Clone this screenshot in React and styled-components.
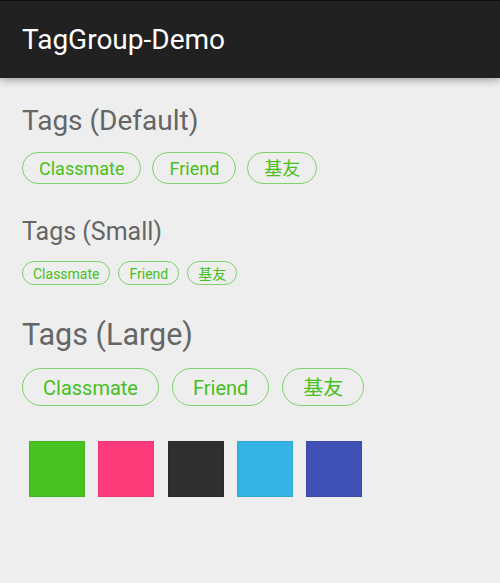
import React from 'react';
import styled, { createGlobalStyle } from 'styled-components';

const GlobalStyle = createGlobalStyle`
  html, body {
    margin: 0;
    padding: 0;
    background: #eeeeee;
    font-family: Roboto, "Noto Sans", "Noto Sans CJK SC", sans-serif;
  }
`;

const sizes = {
  default: { font: 18, height: 32, padX: 16, gap: 11, headFont: 28 },
  small: { font: 14, height: 24, padX: 10, gap: 8, headFont: 25 },
  large: { font: 20, height: 38, padX: 20, gap: 13, headFont: 30.5 },
};

const Page = styled.div`
  width: 500px;
  height: 583px;
  background: #eeeeee;
  overflow: hidden;
`;

const Toolbar = styled.header`
  height: 77px;
  background: #212121;
  border-top: 1px solid #0c0c0c;
  box-shadow: 0 2px 8px rgba(0, 0, 0, 0.35);
  display: flex;
  align-items: center;
  padding-left: 22px;
  position: relative;
  z-index: 1;
`;

const Title = styled.h1`
  margin: 0;
  color: #ffffff;
  font-size: 28px;
  font-weight: 400;
  line-height: 1;
`;

const Content = styled.main`
  padding: 29px 22px 0;
  display: flex;
  flex-direction: column;
`;

const Section = styled.section`
  display: flex;
  flex-direction: column;
  gap: 17px;
  margin-bottom: 35px;
`;

const Heading = styled.h2`
  margin: 0;
  height: ${p => Math.ceil(sizes[p.$size].headFont)}px;
  color: #666666;
  font-weight: 400;
  font-size: ${p => sizes[p.$size].headFont}px;
  line-height: 1;
`;

const TagRow = styled.div`
  display: flex;
  gap: ${p => sizes[p.$size].gap}px;
`;

const Tag = styled.span`
  box-sizing: border-box;
  height: ${p => sizes[p.$size].height}px;
  padding: 2px ${p => sizes[p.$size].padX}px 0;
  display: inline-flex;
  align-items: center;
  border: 1px solid #7ed36a;
  border-radius: ${p => sizes[p.$size].height / 2}px;
  color: #46c01c;
  font-size: ${p => sizes[p.$size].font}px;
  line-height: 1;
`;

const Swatches = styled.div`
  display: flex;
  gap: 13.25px;
  padding-left: 7px;
`;

const Swatch = styled.div`
  box-sizing: border-box;
  width: 56px;
  height: 56px;
  background: ${p => p.$color};
  border: 1px solid rgba(0, 0, 0, 0.08);
`;

const groups = [
  { size: 'default', label: 'Tags (Default)' },
  { size: 'small', label: 'Tags (Small)' },
  { size: 'large', label: 'Tags (Large)' },
];

const tags = ['Classmate', 'Friend', '基友'];
const colors = ['#49c322', '#ff3c7b', '#2f2f2f', '#33b4e4', '#3f51b5'];

export default function App() {
  return (
    <Page>
      <GlobalStyle />
      <Toolbar>
        <Title>TagGroup-Demo</Title>
      </Toolbar>
      <Content>
        {groups.map(g => (
          <Section key={g.size}>
            <Heading $size={g.size}>{g.label}</Heading>
            <TagRow $size={g.size}>
              {tags.map(t => (
                <Tag key={t} $size={g.size}>{t}</Tag>
              ))}
            </TagRow>
          </Section>
        ))}
        <Swatches>
          {colors.map(c => <Swatch key={c} $color={c} />)}
        </Swatches>
      </Content>
    </Page>
  );
}
